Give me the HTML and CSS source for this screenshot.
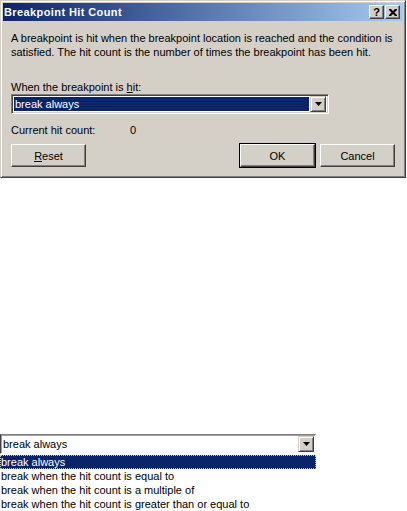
FILE: index.html
```html
<!DOCTYPE html>
<html>
<head>
<meta charset="utf-8">
<link rel="stylesheet" href="styles.css">
</head>
<body>
<div class="dialog">
  <div class="titlebar">
    <span class="title">Breakpoint Hit Count</span>
    <span class="tbtns">
      <span class="tbtn help">?</span>
      <span class="tbtn close"><svg width="8" height="7" viewBox="0 0 8 7"><path d="M0 0h2l2 2 2-2h2v1l-2.5 2.5L8 6v1H6L4 5 2 7H0V6l2.5-2.5L0 1z" fill="#000"/></svg></span>
    </span>
  </div>
  <div class="content">
    <p class="desc">A breakpoint is hit when the breakpoint location is reached and the condition is satisfied. The hit count is the number of times the breakpoint has been hit.</p>
    <div class="label">When the breakpoint is <u>h</u>it:</div>
    <div class="combo">
      <div class="combo-text selected">break always</div>
      <div class="drop"><svg width="7" height="4" viewBox="0 0 7 4"><path d="M0 0h7L3.5 4z" fill="#000"/></svg></div>
    </div>
    <div class="count"><span class="count-label">Current hit count:</span><span>0</span></div>
    <div class="buttons">
      <button class="btn"><u>R</u>eset</button>
      <span class="spacer"></span>
      <button class="btn default">OK</button>
      <button class="btn">Cancel</button>
    </div>
  </div>
</div>

<div class="dropdown-demo">
  <div class="combo plain">
    <div class="combo-text">break always</div>
    <div class="drop"><svg width="7" height="4" viewBox="0 0 7 4"><path d="M0 0h7L3.5 4z" fill="#000"/></svg></div>
  </div>
  <ul class="list">
    <li class="active">break always</li>
    <li>break when the hit count is equal to</li>
    <li>break when the hit count is a multiple of</li>
    <li>break when the hit count is greater than or equal to</li>
  </ul>
</div>
</body>
</html>
```

FILE: styles.css
```css
html, body {
  margin: 0;
  padding: 0;
  background: #fff;
}
body {
  font-family: "Liberation Sans", Arial, sans-serif;
  font-size: 11px;
  color: #000;
}
.dialog {
  width: 400px;
  height: 172px;
  background: #d4d0c8;
  border: 1px solid;
  border-color: #d4d0c8 #404040 #404040 #d4d0c8;
  box-shadow: inset 1px 1px 0 #fff, inset -1px -1px 0 #808080;
  padding: 2px;
  box-sizing: content-box;
  display: flex;
  flex-direction: column;
}
.titlebar {
  height: 18px;
  background: linear-gradient(to right, #0a246a, #a6caf0);
  display: flex;
  align-items: center;
  justify-content: space-between;
  padding: 0 3px 0 1px;
}
.title {
  color: #fff;
  font-weight: bold;
  font-family: "Liberation Sans", Arial, sans-serif;
  font-size: 11px;
  letter-spacing: 0.4px;
}
.tbtns {
  display: flex;
  gap: 0;
}
.tbtn {
  width: 15px;
  height: 14px;
  box-sizing: border-box;
  background: #d4d0c8;
  border: 1px solid;
  border-color: #fff #404040 #404040 #fff;
  box-shadow: inset -1px -1px 0 #808080;
  display: flex;
  align-items: center;
  justify-content: center;
  font-weight: bold;
  font-size: 11px;
  line-height: 1;
}
.tbtn.close {
  margin-left: 1px;
}
.content {
  padding: 10px 8px 0 8px;
}
.desc {
  margin: 0;
  line-height: 14px;
}
.label {
  margin-top: 21px;
  line-height: 14px;
}
.combo {
  margin-top: 0;
  width: 318px;
  height: 20px;
  box-sizing: border-box;
  background: #fff;
  border: 1px solid;
  border-color: #808080 #fff #fff #808080;
  box-shadow: inset 1px 1px 0 #404040, inset -1px -1px 0 #d4d0c8;
  display: flex;
  padding: 2px;
}
.combo-text {
  flex: 1;
  line-height: 14px;
  padding-left: 1px;
}
.combo-text.selected {
  background: #0a246a;
  color: #fff;
  margin-right: 1px;
}
.drop {
  width: 16px;
  height: 16px;
  margin-top: -1px;
  box-sizing: border-box;
  background: #d4d0c8;
  border: 1px solid;
  border-color: #d4d0c8 #404040 #404040 #d4d0c8;
  box-shadow: inset 1px 1px 0 #fff, inset -1px -1px 0 #808080;
  display: flex;
  align-items: center;
  justify-content: center;
}
.count {
  margin-top: 9px;
  line-height: 14px;
  display: flex;
}
.count-label {
  width: 119px;
}
.buttons {
  margin-top: 7px;
  display: flex;
  gap: 5px;
}
.spacer {
  flex: 1;
}
.btn {
  width: 75px;
  height: 23px;
  box-sizing: border-box;
  font: inherit;
  color: #000;
  background: #d4d0c8;
  border: 1px solid;
  border-color: #fff #404040 #404040 #fff;
  box-shadow: inset -1px -1px 0 #808080;
  padding: 0;
}
.btn.default {
  outline: 1px solid #000;
  outline-offset: 0;
}
.dropdown-demo {
  margin-top: 256px;
  width: 316px;
}
.combo.plain {
  width: 316px;
  height: 20px;
  border-color: #808080 #fff #fff #404040;
  box-shadow: inset 1px 1px 0 #a0a0a0;
  padding: 1px 1px 1px 1px;
  align-items: center;
}
.combo.plain .drop {
  margin-top: 0;
}
.list {
  list-style: none;
  margin: 1px 0 0;
  padding: 0;
}
.list li {
  line-height: 14px;
  padding-left: 1px;
}
.list li.active {
  background: #0a246a;
  color: #fff;
  outline: 1px dotted #c0c0c0;
  outline-offset: -1px;
}
```
